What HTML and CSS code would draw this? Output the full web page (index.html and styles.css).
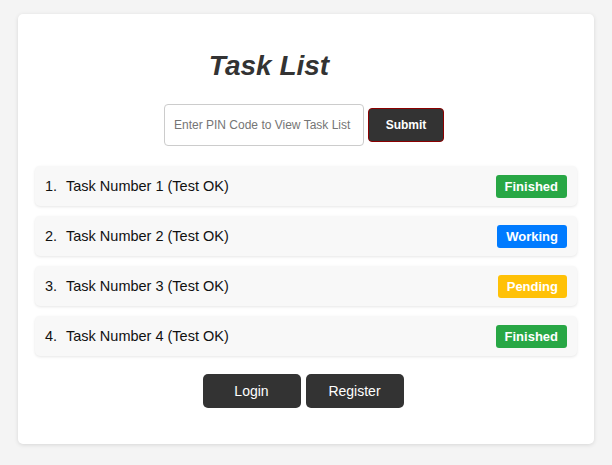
FILE: index.html
```html
<!DOCTYPE html>
<html>
<head>
<meta charset="utf-8">
<link rel="stylesheet" href="styles.css">
</head>
<body>
<div class="card">
  <h1 class="title">Task List</h1>
  <form class="pin-form">
    <input class="pin-input" type="text" placeholder="Enter PIN Code to View Task List">
    <button class="submit-btn" type="button">Submit</button>
  </form>
  <ul class="tasks">
    <li class="task"><span class="task-name"><span class="num">1.</span>Task Number 1 (Test OK)</span><span class="badge finished">Finished</span></li>
    <li class="task"><span class="task-name"><span class="num">2.</span>Task Number 2 (Test OK)</span><span class="badge working">Working</span></li>
    <li class="task"><span class="task-name"><span class="num">3.</span>Task Number 3 (Test OK)</span><span class="badge pending">Pending</span></li>
    <li class="task"><span class="task-name"><span class="num">4.</span>Task Number 4 (Test OK)</span><span class="badge finished">Finished</span></li>
  </ul>
  <div class="actions">
    <button class="action-btn" type="button">Login</button>
    <button class="action-btn" type="button">Register</button>
  </div>
</div>
</body>
</html>
```
FILE: styles.css
```css
html, body {
  margin: 0;
  padding: 0;
  background: #f4f4f4;
  font-family: "Liberation Sans", Arial, sans-serif;
  color: #333;
}
body {
  padding: 14px 18px 22px;
}
.card {
  background: #fff;
  border-radius: 5px;
  box-shadow: 0 1px 4px rgba(0, 0, 0, 0.12);
  padding: 34px 17px 36px;
  height: 360px;
}
.title {
  margin: 0 74px 0 0;
  text-align: center;
  font-size: 28px;
  font-style: italic;
  font-weight: bold;
  color: #333;
  line-height: 36px;
}
.pin-form {
  display: flex;
  justify-content: center;
  align-items: center;
  gap: 4px;
  margin: 20px 0 20px;
  padding-right: 4px;
}
.pin-input {
  width: 200px;
  height: 42px;
  box-sizing: border-box;
  border: 1px solid #ccc;
  border-radius: 4px;
  padding: 0 9px;
  font-family: "Liberation Sans", Arial, sans-serif;
  font-size: 12px;
  color: #333;
}
.pin-input::placeholder {
  color: #757575;
}
.submit-btn {
  width: 76px;
  height: 34px;
  box-sizing: border-box;
  background: #333;
  color: #fff;
  border: 1px solid #8b0000;
  border-radius: 4px;
  font-family: "Liberation Sans", Arial, sans-serif;
  font-size: 12px;
  font-weight: bold;
}
.tasks {
  list-style: none;
  margin: 0;
  padding: 0;
  display: flex;
  flex-direction: column;
  gap: 10px;
}
.task {
  display: flex;
  justify-content: space-between;
  align-items: center;
  height: 40px;
  box-sizing: border-box;
  padding: 0 10px;
  background: #f8f8f8;
  border-radius: 5px;
  box-shadow: 0 1px 3px rgba(0, 0, 0, 0.1);
  font-size: 14.5px;
  color: #111;
}
.num {
  display: inline-block;
  width: 21px;
}
.badge {
  color: #fff;
  font-size: 13px;
  font-weight: bold;
  padding: 3px 9px;
  border-radius: 3px;
  line-height: 17px;
}
.finished { background: #28a745; }
.working { background: #007bff; }
.pending { background: #ffc107; }
.actions {
  display: flex;
  justify-content: center;
  gap: 5px;
  margin-top: 18px;
  padding-right: 6px;
}
.action-btn {
  width: 98px;
  height: 34px;
  background: #333;
  color: #fff;
  border: none;
  border-radius: 5px;
  font-family: "Liberation Sans", Arial, sans-serif;
  font-size: 14px;
}
```
